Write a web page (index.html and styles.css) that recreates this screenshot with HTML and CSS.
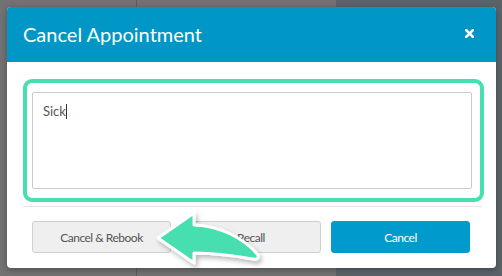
FILE: index.html
```html
<!DOCTYPE html>
<html lang="en">

<head>
    <meta charset="UTF-8">
    <meta name="viewport" content="width=device-width, initial-scale=1.0">
    <title>Cancel Appointment</title>
    <link rel="stylesheet" href="styles.css">
</head>

<body>
    <!-- backdrop -->
    <div class="backdrop">
        <div class="modal">
            <div class="modal-header">
                <h1 class="modal-title">Cancel Appointment</h1>
                <svg class="close" width="9" height="9" viewBox="0 0 9 9">
                    <path d="M1,1 L8,8 M8,1 L1,8" stroke="#fff" stroke-width="2.6" stroke-linecap="square" />
                </svg>
            </div>
            <div class="modal-body">
                <div class="highlight">
                    <div class="reason">Sick<span class="caret"></span></div>
                </div>
            </div>
            <div class="modal-footer">
                <button class="btn">Cancel &amp; Rebook</button>
                <button class="btn">Recall</button>
                <button class="btn btn-primary">Cancel</button>
            </div>
        </div>
    </div>

    <!-- pointer arrow -->
    <svg class="pointer" width="502" height="276" viewBox="0 0 502 276">
        <defs>
            <filter id="shadow" x="-20%" y="-20%" width="140%" height="140%">
                <feDropShadow dx="2" dy="3" stdDeviation="2.5" flood-color="#000" flood-opacity="0.28" />
            </filter>
        </defs>
        <path d="M158,238 L194,213 L194,225 C220,226 244,238 258,255 C259,258 257,260 253,259 C236,256 214,253 194,253 L194,263 Z"
            fill="#47deb0" stroke="#fff" stroke-width="3" stroke-linejoin="round" filter="url(#shadow)" />
    </svg>
</body>

</html>
```

FILE: styles.css
```css
* {
    padding: 0;
    margin: 0;
    box-sizing: border-box;
}

body {
    width: 502px;
    height: 276px;
    overflow: hidden;
    font-family: Lato, "Liberation Sans", sans-serif;
    background: #6f6f6f;
    position: relative;
}

/* 背景 */
.backdrop {
    height: 100%;
    padding: 7px 0 0 7px;
    background:
        linear-gradient(90deg, transparent 136px, #5d5d5d 136px, #5d5d5d 137px, transparent 137px, transparent 336px, #5a6468 336px),
        #727272;
}

/* 弹窗 */
.modal {
    width: 489px;
    height: 261px;
    background: #fff;
    border-radius: 4px;
    box-shadow: 0 2px 6px rgba(0, 0, 0, .3);
}

.modal-header {
    height: 55px;
    background: #0096c5;
    border-radius: 4px 4px 0 0;
    display: flex;
    align-items: center;
    justify-content: space-between;
    padding: 0 22px 0 16px;
}

.modal-title {
    color: #fff;
    font-size: 20px;
    font-weight: 400;
    padding-bottom: 1px;
}

.close {
    display: block;
    margin-top: -2px;
}

.modal-body {
    padding: 17px 12px 0 16px;
}

/* 绿色高亮框 */
.highlight {
    border: 4px solid #47deb0;
    border-radius: 9px;
    padding: 9px 8px 9px 5px;
}

.reason {
    height: 97px;
    border: 1px solid #cccccc;
    border-radius: 2px;
    padding: 10px 10px;
    font-size: 13px;
    color: #555;
}

.caret {
    display: inline-block;
    width: 1px;
    height: 15px;
    background: #333;
    vertical-align: -3px;
}

.modal-footer {
    margin: 4px 14px 0 16px;
    border-top: 1px solid #e5e5e5;
    padding: 14px 12px 0 9px;
    display: grid;
    grid-template-columns: 1fr 1fr 1fr;
    gap: 10.5px;
}

.btn {
    height: 32px;
    border: 1px solid #cfcfcf;
    border-radius: 3px;
    background: #efefef;
    color: #555;
    font-family: Lato, "Liberation Sans", sans-serif;
    font-size: 12px;
    letter-spacing: -0.5px;
}

.btn-primary {
    background: #009bcc;
    border-color: #009bcc;
    color: #fff;
}

/* 箭头 */
.pointer {
    position: absolute;
    left: 0;
    top: 0;
    pointer-events: none;
}
```
